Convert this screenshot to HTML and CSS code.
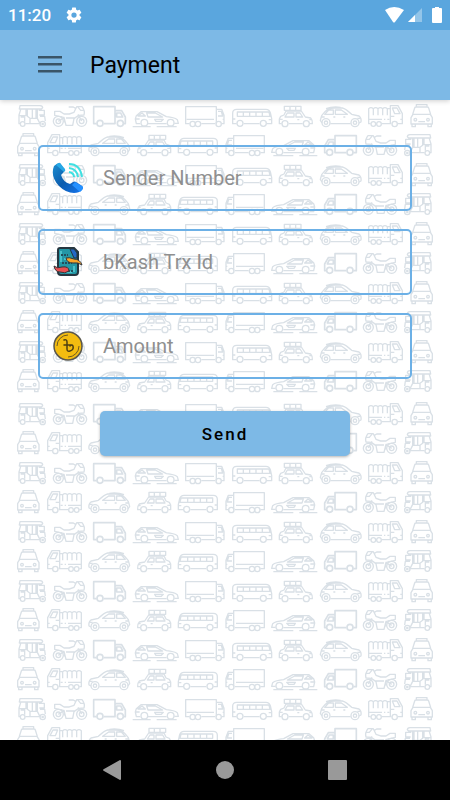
FILE: index.html
```
<!DOCTYPE html>
<html lang="en">
<head>
  <meta charset="UTF-8" />
  <meta name="viewport" content="width=device-width, initial-scale=1" />
  <title>Payment</title>
  <link rel="stylesheet" href="styles.css">
</head>
<body>

  <!-- Status bar -->
  <div class="status-bar">
    <span class="clock">11:20</span>
    <svg class="gear" viewBox="0 0 24 24" fill="currentColor">
      <path d="M19.4 13a7.500 7.500 0 0 0 0-2l2.200-1.700a.5.5 0 0 0 .1-.6l-2-3.500a.5.5 0 0 0-.6-.2l-2.500 1a7.300 7.300 0 0 0-1.700-1l-.4-2.600a.5.5 0 0 0-.5-.4h-4a.5.5 0 0 0-.5.4L9.100 5a7.300 7.300 0 0 0-1.700 1l-2.500-1a.5.5 0 0 0-.6.2l-2 3.500a.5.5 0 0 0 .1.6L4.600 11a7.500 7.500 0 0 0 0 2l-2.200 1.700a.5.5 0 0 0-.1.6l2 3.500c.1.2.4.3.6.2l2.500-1a7.300 7.300 0 0 0 1.700 1l.4 2.600c0 .2.2.4.5.4h4c.3 0 .5-.2.5-.4l.4-2.600a7.300 7.300 0 0 0 1.700-1l2.500 1c.2.1.5 0 .6-.2l2-3.500a.5.5 0 0 0-.1-.6zM12 15.500a3.500 3.500 0 1 1 0-7 3.500 3.500 0 0 1 0 7z" />
    </svg>
    <svg class="signals" viewBox="0 0 58 18" fill="currentColor">
      <path d="M1 4Q10-2 20 4L11 16Q10 17 9 16z" />
      <path opacity=".35" d="M38 2v14H24z" />
      <path d="M31 9v7h-7z" />
      <path d="M48 3q0-1 1-1h2V1h4v1h2q1 0 1 1v13q0 1-1 1h-8q-1 0-1-1z" />
    </svg>
  </div>

  <!-- App bar -->
  <header class="app-bar">
    <button class="menu-btn" type="button" aria-label="Menu">
      <svg viewBox="0 0 24 18" fill="#3a5568">
        <path d="M0 0h24v2.500H0zM0 7h24v2.500H0zM0 14h24v2.500H0z" />
      </svg>
    </button>
    <h1>Payment</h1>
  </header>

  <main class="content">
    <!-- Vehicle wallpaper -->
    <svg class="wallpaper" viewBox="0 0 450 640" preserveAspectRatio="xMidYMin slice" aria-hidden="true">
      <defs>
        <g id="vehicles">
          <!-- rickshaw -->
          <path d="M60 20h60q8 1 8 6l-4 4H58zM62 32l-5 16v26h4M58 50h20V32M62 54h12v14M82 30v22l8 6v16h-14M97 31v26M108 31v26M90 58h22V31M112 58l8 16H84M116 34h17v14h-15M120 52h14l2 14" />
          <circle cx="68" cy="75" r="7" /><circle cx="128" cy="75" r="8" /><circle cx="128" cy="75" r="2" />
          <!-- motorcycle -->
          <path d="M164 37h16l12 8h16l14-5 8-17h16q10 12 6 25l-16 1-14 10-4 20h-20l-6-24-28-6zM206 24h14l8 5M232 22l10 12h10M234 46l11 20M190 57l-15 10M198 57h28M184 53q12 4 10 18" />
          <circle cx="175" cy="67" r="15" /><circle cx="175" cy="67" r="7" /><circle cx="245" cy="67" r="15" /><circle cx="245" cy="67" r="7" />
          <!-- box truck -->
          <path stroke-width="5" d="M290 74h-9V23h64v51h-34M345 35h20l11 19v20h-6M350 42h12l6 12h-18z" />
          <circle stroke-width="5" cx="300" cy="73" r="9" /><circle stroke-width="5" cx="361" cy="73" r="9" />
          <!-- sports car -->
          <path d="M421 74h-12l-3-14 3-10 14-12h48l28 15q24 2 33 9l3 11h-12M444 74h56M414 51l12-9 10 9zM440 42h26l22 12h-44zM464 61h26l-6 6h-16zM407 60h12M398 83h54M470 83h60" />
          <circle cx="433" cy="71" r="10" /><circle cx="512" cy="71" r="10" />
          <!-- long truck -->
          <path d="M569 74h-12V23h92v51M560 61h82M604 74h41M649 31h16l7 18v25h-6M654 37h10l4 14h-14M668 61h6" />
          <circle cx="578" cy="75" r="8" /><circle cx="594" cy="75" r="8" /><circle cx="656" cy="75" r="8" />
          <!-- bus -->
          <path d="M710 74h-12V43q0-12 12-12h88q10 0 13 10l4 18v15h-14M731 74h48M712 39h95l3 13h-98zM730 39v13M749 39v13M768 39v13M787 39v13M700 60h6M806 62h9" />
          <circle cx="720" cy="73" r="9" /><circle cx="790" cy="73" r="9" />
          <!-- car with roof rack -->
          <path d="M845 74h-7V60l4-8 10-4 6-12h46l12 18 16 3q6 6 5 17h-8M866 74h42M853 22h50v12h-50zM870 22v12M887 22v12M862 42h20v12h-27zM888 42h12l8 12h-20zM892 62h6M840 61h8M928 62h8" />
          <circle cx="855" cy="74" r="9" /><circle cx="919" cy="74" r="9" />
          <!-- hatchback -->
          <path d="M966 72l-5-8 4-14 10-12q10-11 28-11h24q10 2 28 19l22 5q8 6 6 18l-6 3M991 74h61M974 46l12-13h14v13zM1006 33h18l18 13h-36zM978 29q18-7 44-4M1000 54h6M1030 54h6M964 54h10M1072 58h8" />
          <circle cx="978" cy="71" r="12" /><circle cx="978" cy="71" r="5" /><circle cx="1065" cy="71" r="12" /><circle cx="1065" cy="71" r="5" />
          <!-- canvas truck -->
          <path d="M1112 74h-6V29q7-6 14 0v20M1120 29q7-6 14 0v20M1134 29q7-6 14 0v20M1148 29q7-6 14 0v20M1162 29h8M1106 54v7h40M1152 61h4M1162 61h6M1146 74h28M1171 74V20h23l13 24v30h-13M1177 27h14l9 17h-16zM1171 52h12M1201 61h6" />
          <circle cx="1120" cy="75" r="7" /><circle cx="1137" cy="75" r="7" /><circle cx="1184" cy="75" r="8" />
          <!-- taxi -->
          <path d="M1249 24v-7h32v7M1238 46l6-19q1-3 4-3h34q3 0 4 3l6 19zM1233 75V56l6-10h52l6 10v19zM1236 75v8h10v-8M1284 75v8h10v-8M1255 68h20" />
          <circle cx="1246" cy="62" r="4" /><circle cx="1284" cy="62" r="4" />
        </g>
        <g id="pair">
          <use href="#vehicles" />
          <use href="#vehicles" transform="translate(1350 87) scale(-1 1)" />
        </g>
        <pattern id="traffic" y="-119" width="450" height="416" patternUnits="userSpaceOnUse">
          <g transform="scale(.33333)" fill="none" stroke="#d9e0e6" stroke-width="4" stroke-linejoin="round">
            <use href="#pair" />
            <use href="#pair" y="177" />
            <use href="#pair" y="354" />
            <use href="#pair" y="531" />
            <use href="#pair" y="708" />
            <use href="#pair" y="885" />
            <use href="#pair" y="1062" />
          </g>
        </pattern>
      </defs>
      <rect width="450" height="640" fill="url(#traffic)" />
    </svg>

    <form class="payment-form">
      <div class="field">
        <svg viewBox="0 0 32 32" aria-hidden="true">
          <defs>
            <linearGradient id="handset" x1="0" y1="0" x2="1" y2="1">
              <stop offset="0" stop-color="#1c8fd0" />
              <stop offset=".5" stop-color="#0c5cae" />
              <stop offset="1" stop-color="#1676f0" />
            </linearGradient>
          </defs>
          <path fill="url(#handset)" d="M2 4Q5 1 8 1l4 6q1 2-1 4l-2 2q2 7 9 9l3-2q2-1 3 0l6 4q2 1 0 4-3 3-8 3-8 0-15-7Q-2 14 2 4z" />
          <path fill="#27a8e6" d="M4 3q3-3 4-2l5 6q1 2-1 3z" />
          <path fill="#2490ff" d="M23 20l7 4q2 1 0 4l-2 2-8-7z" />
          <path fill="none" stroke="#3fe0e2" stroke-width="2" d="M17 2q11 0 13 13M17 6q8 1 9 9M17 10q5 1 5 5" />
        </svg>
        <input type="text" inputmode="tel" aria-label="Sender Number" placeholder="Sender Number">
      </div>

      <div class="field">
        <svg viewBox="0 0 32 32" aria-hidden="true">
          <path fill="#2496a5" stroke="#263640" stroke-width="2" d="M6 4q0-2 2-2h14l4 4v20q0 3-3 3H9q-3 0-3-3z" />
          <path fill="#2468c7" stroke="#263640" d="M18 3h4l3 4v5h-3z" />
          <path stroke="#4ac1ca" stroke-width="2" d="M9 5v11M12 13h5M10 26h10M22 20v6" />
          <path stroke="#224e5c" stroke-width="2" stroke-dasharray="2 1" d="M9 9h7M10 17h10M16 25h6" />
          <path fill="#f8a52b" stroke="#343438" d="M14 12q3-1 8 1 6 0 8 6-4-3-9-2-6 0-7-5z" />
          <path fill="#e84f50" stroke="#343438" d="M2 20q3 3 8 1 7-1 7 4-4 3-9 1-5 0-6-6z" />
        </svg>
        <input type="text" aria-label="bKash Trx Id" placeholder="bKash Trx Id">
      </div>

      <div class="field">
        <svg viewBox="0 0 32 32" aria-hidden="true">
          <circle cx="16" cy="16" r="14" fill="#f3bc10" stroke="#5a574c" stroke-width="1.500" />
          <path fill="none" stroke="#6e5920" d="M5 16A11 11 0 0 1 16 5M27 16A11 11 0 0 1 16 27" />
          <path fill="none" stroke="#4d3f12" stroke-width="1.500" stroke-linecap="round" d="M12 10q3-1 3 2v7q0 3 3 2 4-1 3-5-1-2-3 0M12 15h7" />
        </svg>
        <input type="text" inputmode="decimal" aria-label="Amount" placeholder="Amount">
      </div>

      <button class="send-btn" type="button">Send</button>
    </form>
  </main>

  <!-- System navigation -->
  <nav class="nav-bar">
    <button type="button" aria-label="Back">
      <svg viewBox="0 0 20 20" fill="currentColor"><path d="M19 1v18q0 1-1 1L2 11q-2-1 0-2L18 0q1 0 1 1z" /></svg>
    </button>
    <button type="button" aria-label="Home">
      <svg viewBox="0 0 20 20" fill="currentColor"><circle cx="10" cy="10" r="9" /></svg>
    </button>
    <button type="button" aria-label="Recent apps">
      <svg viewBox="0 0 20 20" fill="currentColor"><rect width="19" height="20" rx="1" /></svg>
    </button>
  </nav>

</body>
</html>
```

FILE: styles.css
```
:root {
  --color-status: #5aa6de;
  --color-primary: #7db9e6;
  --color-border: #6cb0e6;
  --color-hint: #8f8f8f;
}

* {
  box-sizing: border-box;
  margin: 0;
  padding: 0;
}
body {
  min-height: 100vh;
  display: flex;
  flex-direction: column;
  font-family: Roboto, sans-serif;
  background: #fff;
  color: #000;
}
button {
  border: none;
  background: none;
  color: inherit;
  font-family: inherit;
  cursor: pointer;
}
svg {
  display: block;
}

/* Status bar */
.status-bar {
  position: relative;
  z-index: 2;
  display: flex;
  align-items: center;
  height: 30px;
  padding: 0 8px;
  background: var(--color-status);
  color: #fff;
}
.clock {
  font-size: 17px;
  font-weight: 500;
}
.gear {
  width: 18px;
  height: 18px;
  margin-left: 14px;
}
.signals {
  width: 58px;
  height: 18px;
  margin-left: auto;
}

/* App bar */
.app-bar {
  position: relative;
  z-index: 1;
  display: flex;
  align-items: center;
  gap: 28px;
  height: 70px;
  padding: 0 38px;
  background: var(--color-primary);
  box-shadow: 0 1px 5px rgba(0, 0, 0, 0.2);
}
.menu-btn {
  width: 24px;
}
.app-bar h1 {
  font-size: 23px;
  font-weight: 400;
}

/* Content */
.content {
  position: relative;
  flex: 1;
  padding: 45px 38px;
}
.wallpaper {
  position: absolute;
  top: 0;
  left: 0;
  width: 100%;
  height: 100%;
}
.payment-form {
  position: relative;
  display: flex;
  flex-direction: column;
  gap: 18px;
}
.field {
  display: flex;
  align-items: center;
  gap: 19px;
  height: 66px;
  padding: 0 12px;
  border: 2px solid var(--color-border);
  border-radius: 5px;
}
.field svg {
  flex: none;
  width: 32px;
  height: 32px;
}
.field input {
  flex: 1;
  min-width: 0;
  height: 100%;
  border: none;
  outline: none;
  background: none;
  font-family: inherit;
  font-size: 20px;
}
.field input::placeholder {
  color: var(--color-hint);
}
.send-btn {
  align-self: center;
  width: 250px;
  height: 45px;
  margin-top: 14px;
  border-radius: 5px;
  background: var(--color-primary);
  box-shadow: 0 1px 3px rgba(0, 0, 0, 0.3);
  font-size: 17px;
  font-weight: 500;
  letter-spacing: 2px;
}

/* Navigation bar */
.nav-bar {
  display: flex;
  justify-content: center;
  align-items: center;
  gap: 93px;
  height: 60px;
  background: #000;
  color: #999;
}
.nav-bar svg {
  width: 20px;
  height: 20px;
}
```
